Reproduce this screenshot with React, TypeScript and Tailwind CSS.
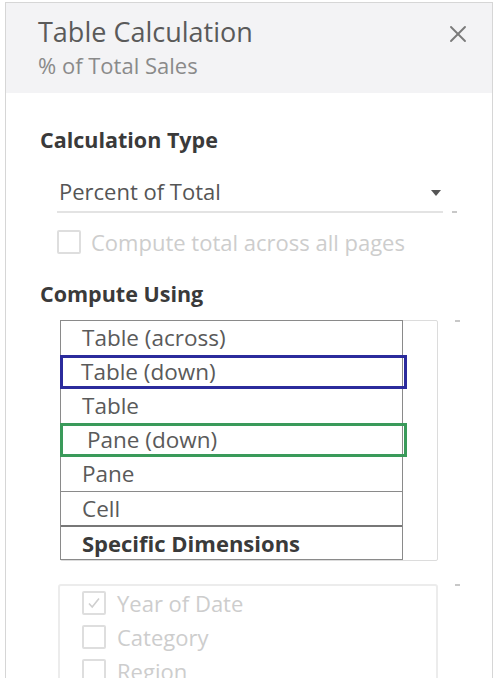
import { X } from "lucide-react";

const items = [
  { label: "Table (across)", kind: "plain" },
  { label: "Table (down)", kind: "blue" },
  { label: "Table", kind: "plain" },
  { label: "Pane (down)", kind: "green" },
  { label: "Pane", kind: "plain" },
  { label: "Cell", kind: "plain" },
  { label: "Specific Dimensions", kind: "bold" },
];

function Dash() {
  return <div className="w-[5px] h-[2px] bg-[#c8c8c8]" />;
}

function Box({ checked }: { checked?: boolean }) {
  return (
    <div className="w-[24px] h-[24px] border-2 border-[#dedede] rounded-[2px] flex items-center justify-center shrink-0">
      {checked && (
        <svg width="16" height="16" viewBox="0 0 16 16" fill="none">
          <path d="M3 8.5l3.2 3.5L13 3.5" stroke="#cfcfcf" strokeWidth="1.6" />
        </svg>
      )}
    </div>
  );
}

export default function App() {
  return (
    <div className="w-[500px] h-[688px] bg-white overflow-hidden font-['Open_Sans',sans-serif]">
      <div className="ml-[5px] mt-[2px] w-[488px] h-[676px] border-x border-t border-[#d6d6d6] flex flex-col overflow-hidden">
        <div className="h-[90px] bg-[#f3f3f5] pl-[32px] pr-[20px] pt-[12px] flex justify-between shrink-0">
          <div>
            <div className="text-[27px] leading-[34px] text-[#5a5a5a] whitespace-nowrap">Table Calculation</div>
            <div className="text-[22px] leading-[26px] text-[#8a8a8a] mt-[3px] whitespace-nowrap">% of Total Sales</div>
          </div>
          <X className="w-[28px] h-[28px] text-[#7a7a7a] mt-[5px]" strokeWidth={1.6} />
        </div>

        <div className="pl-[34px] pt-[35px] flex flex-col">
          <div className="text-[21.5px] leading-[24px] font-bold text-[#3a3a3a] whitespace-nowrap">Calculation Type</div>

          <div className="flex items-end mt-[23px]">
            <div className="ml-[17px] w-[386px] h-[38px] border-b-2 border-[#e3e3e3] flex items-start justify-between pr-[2px]">
              <span className="text-[22px] leading-[26px] text-[#555] pl-[2px] pt-[3px] whitespace-nowrap">Percent of Total</span>
              <svg width="10" height="6" viewBox="0 0 10 6" className="mt-[15px]">
                <path d="M0 0h10L5 6z" fill="#555" />
              </svg>
            </div>
            <div className="ml-[9px]"><Dash /></div>
          </div>

          <div className="flex items-center ml-[17px] mt-[17px] gap-[10px]">
            <Box />
            <span className="text-[22px] leading-[24px] text-[#cdcdcd] whitespace-nowrap">Compute total across all pages</span>
          </div>

          <div className="text-[21.5px] leading-[24px] font-bold text-[#3a3a3a] mt-[28px] whitespace-nowrap">Compute Using</div>

          <div className="flex items-start mt-[14px]">
            <div className="ml-[20px] w-[378px] h-[241px] border border-[#dcdcdc] rounded-[2px] relative">
              <div className="absolute -left-[1px] -top-[1px] w-[343px] bg-white border border-[#8a8a8a] flex flex-col">
                {items.map((it, i) => (
                  <div
                    key={it.label}
                    className={
                      "h-[34px] flex items-center leading-[24px] whitespace-nowrap " +
                      (it.kind === "blue"
                        ? "border-[3px] border-[#2b2b9c] -mx-[1px] mr-[-5px] pl-[18px] "
                        : it.kind === "green"
                        ? "border-[3px] border-[#3a9a5a] -mx-[1px] mr-[-5px] pl-[24px] "
                        : "pl-[21px] ") +
                      (i > 0 && it.kind === "plain" && items[i - 1].kind === "plain" ? "border-t border-[#8a8a8a] " : "") +
                      (it.kind === "bold"
                        ? "border-t-2 border-[#777] font-bold text-[#3a3a3a] text-[22px]"
                        : "text-[#5a5a5a] text-[22.5px]")
                    }
                  >
                    {it.label}
                  </div>
                ))}
              </div>
            </div>
            <div className="ml-[17px] flex flex-col">
              <Dash />
            </div>
          </div>

          <div className="flex items-start mt-[23px]">
            <div className="ml-[18px] w-[380px] h-[140px] border-2 border-[#ececec] rounded-[3px] pl-[22px] pt-[5px] flex flex-col gap-[10px]">
              {["Year of Date", "Category", "Region"].map((t, i) => (
                <div key={t} className="flex items-center gap-[11px]">
                  <Box checked={i === 0} />
                  <span className="text-[22px] leading-[24px] text-[#cdcdcd] whitespace-nowrap">{t}</span>
                </div>
              ))}
            </div>
            <div className="ml-[17px]"><Dash /></div>
          </div>
        </div>
      </div>
    </div>
  );
}
